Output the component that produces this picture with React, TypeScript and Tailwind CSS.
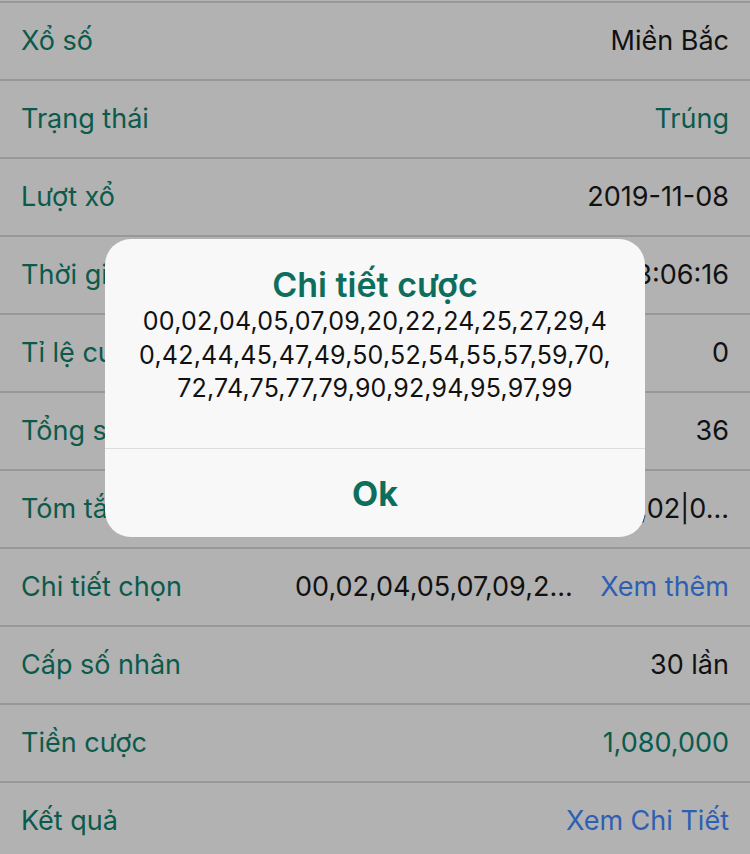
import React from "react";

type Row = {
  label: string;
  value?: string;
  valueClass?: string;
};

const rows: Row[] = [
  { label: "Xổ số", value: "Miền Bắc" },
  { label: "Trạng thái", value: "Trúng", valueClass: "text-[#0b5a4b]" },
  { label: "Lượt xổ", value: "2019-11-08" },
  { label: "Thời gian cược", value: "2019-11-08 18:06:16" },
  { label: "Tỉ lệ cược", value: "0" },
  { label: "Tổng số cược", value: "36" },
  { label: "Tóm tắt", value: "Lô 2 số|00,02|0..." },
];

const rowsBottom: Row[] = [
  { label: "Cấp số nhân", value: "30 lần" },
  { label: "Tiền cược", value: "1,080,000", valueClass: "text-[#0b5a4b]" },
  { label: "Kết quả", value: "Xem Chi Tiết", valueClass: "text-[#2f5fb3]" },
];

function InfoRow({ label, value, valueClass = "text-[#111]" }: Row) {
  return (
    <div className="flex items-center justify-between h-[78px] border-t-2 border-[#98989a] px-[21px]">
      <span className="text-[#0b5a4b] whitespace-nowrap">{label}</span>
      <span className={`${valueClass} whitespace-nowrap`}>{value}</span>
    </div>
  );
}

export default function App() {
  return (
    <div
      className="relative w-[750px] h-[854px] overflow-hidden bg-[#b2b2b2] text-[27px]"
      style={{ fontFamily: "Inter, 'Noto Sans', sans-serif" }}
    >
      <div className="pt-px">
        {rows.map((r) => (
          <InfoRow key={r.label} {...r} />
        ))}
        <div className="flex items-center h-[78px] border-t-2 border-[#98989a] px-[21px]">
          <span className="text-[#0b5a4b] w-[274px] whitespace-nowrap">Chi tiết chọn</span>
          <span className="text-[#111] whitespace-nowrap">00,02,04,05,07,09,2...</span>
          <span className="ml-auto text-[#2f5fb3] whitespace-nowrap">Xem thêm</span>
        </div>
        {rowsBottom.map((r) => (
          <InfoRow key={r.label} {...r} />
        ))}
      </div>

      <div className="absolute left-[105px] top-[239px] w-[540px] h-[298px] rounded-[26px] bg-[#f8f8f8] flex flex-col">
        <div className="h-[210px] flex flex-col items-center pt-[27px] border-b border-[#dcdcdc]">
          <div className="text-[34px] leading-[38px] font-semibold text-[#0e6e5e]">Chi tiết cược</div>
          <div className="mt-[1px] text-[25px] tracking-[0.2px] leading-[33.5px] text-[#111] text-center">
            00,02,04,05,07,09,20,22,24,25,27,29,4
            <br />
            0,42,44,45,47,49,50,52,54,55,57,59,70,
            <br />
            72,74,75,77,79,90,92,94,95,97,99
          </div>
        </div>
        <div className="flex-1 flex items-center justify-center text-[34px] font-bold text-[#0e6e5e]">
          Ok
        </div>
      </div>
    </div>
  );
}
